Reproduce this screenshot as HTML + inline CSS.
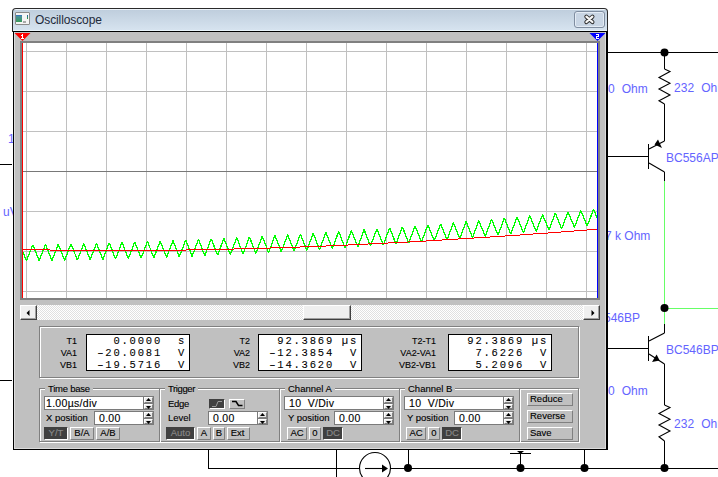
<!DOCTYPE html>
<html><head><meta charset="utf-8">
<style>
*{margin:0;padding:0;box-sizing:border-box}
html,body{width:718px;height:477px;overflow:hidden;background:#fff;position:relative}
body{font-family:"Liberation Sans",sans-serif}
.ab{position:absolute}
.lbl{position:absolute;font-size:12px;color:#6464ff;white-space:pre;line-height:12px}
.ui{position:absolute;font-size:9.5px;color:#000;white-space:pre;line-height:10px;-webkit-text-stroke:0.12px #000}
.etch{position:absolute;border:1px solid #808080;box-shadow:inset 1px 1px 0 #fff,1px 1px 0 #fff}
.btn{position:absolute;background:#c0c0c0;border-top:1px solid #fff;border-left:1px solid #fff;border-right:1px solid #808080;border-bottom:1px solid #808080;font-size:9.5px;line-height:10px;text-align:center;color:#000;-webkit-text-stroke:0.12px #000}
.prs{position:absolute;background:#404040;border-top:1px solid #404040;border-left:1px solid #404040;border-right:1px solid #fff;border-bottom:1px solid #fff;font-size:9.5px;line-height:10px;text-align:center;color:#8a8a8a;-webkit-text-stroke:0.12px #8a8a8a}
.box{position:absolute;background:#fff;border:1px solid #7a7a7a}
.spin{position:absolute;background:#808080}
.sb{position:absolute;background:#e0e0e0;border-top:1px solid #fff;border-left:1px solid #fff;border-right:1px solid #808080;border-bottom:1px solid #808080}
.num{position:absolute;font-family:"Liberation Mono",monospace;font-size:10.5px;line-height:12px;white-space:pre;color:#000;-webkit-text-stroke:0.08px #000}
</style></head><body>

<!-- schematic background -->
<svg class="ab" style="left:0;top:0" width="718" height="477" viewBox="0 0 718 477">
 <g stroke="#000" stroke-width="1" fill="none" shape-rendering="crispEdges">
  <line x1="0" y1="164.5" x2="12" y2="164.5"/>
  <line x1="0" y1="380.5" x2="12" y2="380.5"/>
  <line x1="607" y1="52.5" x2="718" y2="52.5"/>
  <line x1="664.5" y1="52" x2="664.5" y2="69"/>
  <line x1="664.5" y1="104" x2="664.5" y2="141"/>
  <line x1="607" y1="156.5" x2="648" y2="156.5"/>
  <line x1="648.5" y1="144" x2="648.5" y2="169"/>
  <line x1="664.5" y1="172" x2="664.5" y2="181"/>
  <line x1="664.5" y1="324" x2="664.5" y2="333"/>
  <line x1="607" y1="348.5" x2="648" y2="348.5"/>
  <line x1="648.5" y1="336" x2="648.5" y2="361"/>
  <line x1="664.5" y1="364" x2="664.5" y2="405"/>
  <line x1="664.5" y1="441" x2="664.5" y2="468"/>
  <line x1="208.5" y1="450" x2="208.5" y2="468"/>
  <line x1="208" y1="468.5" x2="359" y2="468.5"/>
  <line x1="390" y1="468.5" x2="718" y2="468.5"/>
  <line x1="336.5" y1="450" x2="336.5" y2="477"/>
  <line x1="408.5" y1="450" x2="408.5" y2="468"/>
  <line x1="520.5" y1="452" x2="520.5" y2="468"/>
  <line x1="510" y1="453.5" x2="531" y2="453.5"/>
  <line x1="584.5" y1="450" x2="584.5" y2="468"/>
 </g>
 <g stroke="#000" stroke-width="1.1" fill="none">
  <polyline points="664.5,69 670,71.5 659,77.4 670,83.3 659,89 670,95 659,100.8 664.5,104"/>
  <polyline points="664.5,405 670,407.5 659,413.4 670,419.3 659,425 670,431 659,436.8 664.5,441"/>
  <line x1="664.5" y1="141" x2="649" y2="149"/>
  <line x1="649" y1="163" x2="664.5" y2="172"/>
  <line x1="649" y1="341" x2="664.5" y2="333"/>
  <line x1="649" y1="354" x2="664.5" y2="364"/>
  <circle cx="375" cy="468" r="15.5"/>
  <line x1="365" y1="468.5" x2="385" y2="468.5"/>
 </g>
 <g fill="#000">
  <circle cx="664.5" cy="52.5" r="4"/>
  <circle cx="664.5" cy="468" r="4"/>
  <circle cx="408" cy="468" r="4"/>
  <circle cx="520.5" cy="468" r="4"/>
  <circle cx="584.5" cy="468" r="4"/>
  <polygon points="654.5,144.5 658,139.5 662,148"/>
  <polygon points="656.6,354.6 652,362 659.6,360.4"/>
  <polygon points="388,468.5 382,464.5 382,472.5"/>
  <polygon points="517,451 524,451 520.5,454"/>
 </g>
 <g stroke="#66ff66" stroke-width="1" fill="none" shape-rendering="crispEdges">
  <line x1="664.5" y1="181" x2="664.5" y2="324"/>
  <line x1="664" y1="308.5" x2="718" y2="308.5"/>
 </g>
 <circle cx="664.5" cy="308" r="4" fill="#000"/>
</svg>
<div class="lbl" style="left:8px;top:133px">1</div>
<div class="lbl" style="left:3px;top:206px">uV</div>
<div class="lbl" style="left:608px;top:83px;letter-spacing:0.1px">0  Ohm</div>
<div class="lbl" style="left:674px;top:82px;letter-spacing:0.1px">232  Ohm</div>
<div class="lbl" style="left:666px;top:152px">BC556AP</div>
<div class="lbl" style="left:605px;top:230px">7 k Ohm</div>
<div class="lbl" style="left:604px;top:312px">546BP</div>
<div class="lbl" style="left:666px;top:344px">BC546BP</div>
<div class="lbl" style="left:608px;top:385px;letter-spacing:0.1px">0  Ohm</div>
<div class="lbl" style="left:674px;top:418px;letter-spacing:0.1px">232  Ohm</div>

<!-- window -->
<div class="ab" style="left:12px;top:8px;width:596px;height:24px;background:#2a2a2a;border-radius:4px 4px 0 0"></div>
<div class="ab" style="left:13px;top:31px;width:595px;height:419px;background:#000"></div>
<div class="ab" style="left:13px;top:9px;width:594px;height:22px;border-radius:3px 3px 0 0;background:linear-gradient(#eef4fa 0,#eef4fa 1px,#bfcedd 1px,#d6e3ef 21px,#eaf5fb 21px)"></div>
<div class="ab" style="left:14px;top:32px;width:592px;height:417px;background:#c0c0c0;border-left:1px solid #dcdcdc;border-bottom:1px solid #dcdcdc;border-right:1px solid #dcdcdc"></div>
<!-- icon -->
<div class="ab" style="left:15px;top:12px;width:15px;height:13px;background:#f4f4f4;border:1px solid #8a8a8a;border-radius:1px"></div>
<div class="ab" style="left:16px;top:15px;width:6px;height:7px;background:linear-gradient(#3a78b8 0,#3a78b8 1px,#4a90a0 1px,#3a9a5a)"></div>
<div class="ab" style="left:27px;top:15px;width:1px;height:4px;background:linear-gradient(#1e5ab0,#3aa03a)"></div>
<div class="ab" style="left:23px;top:21px;width:3px;height:2px;background:#aaa"></div>
<div class="ab" style="left:35px;top:13px;font-size:12px;line-height:14px;color:#1e2a3a;letter-spacing:-0.1px">Oscilloscope</div>
<!-- close button -->
<div class="ab" style="left:574px;top:11px;width:31px;height:17px;border:1px solid #7f8da0;border-radius:3px;background:#c8d5e4;box-shadow:inset 0 0 0 1px #e4ecf5"></div>
<svg class="ab" style="left:582px;top:13px" width="15" height="13" viewBox="0 0 15 13">
 <path d="M4.4,3.7 L10.4,9 M10.4,3.7 L4.4,9" stroke="#2e2e2e" stroke-width="4.2" stroke-linecap="round"/>
 <path d="M4.4,3.7 L10.4,9 M10.4,3.7 L4.4,9" stroke="#f6f6f6" stroke-width="2.3" stroke-linecap="round"/>
</svg>

<!-- plot -->
<div class="ab" style="left:20px;top:41px;width:580px;height:259px;background:#808080"></div>
<svg class="ab" style="left:22px;top:43px" width="576" height="255" viewBox="22 43 576 255">
 <rect x="22" y="43" width="576" height="255" fill="#fff"/>
 <g stroke="#c0c0c0" stroke-width="1" shape-rendering="crispEdges">
  <line x1="26.5" y1="43" x2="26.5" y2="298"/>
  <line x1="66.5" y1="43" x2="66.5" y2="298"/>
  <line x1="106.5" y1="43" x2="106.5" y2="298"/>
  <line x1="146.5" y1="43" x2="146.5" y2="298"/>
  <line x1="186.5" y1="43" x2="186.5" y2="298"/>
  <line x1="226.5" y1="43" x2="226.5" y2="298"/>
  <line x1="266.5" y1="43" x2="266.5" y2="298"/>
  <line x1="306.5" y1="43" x2="306.5" y2="298"/>
  <line x1="346.5" y1="43" x2="346.5" y2="298"/>
  <line x1="386.5" y1="43" x2="386.5" y2="298"/>
  <line x1="426.5" y1="43" x2="426.5" y2="298"/>
  <line x1="466.5" y1="43" x2="466.5" y2="298"/>
  <line x1="506.5" y1="43" x2="506.5" y2="298"/>
  <line x1="546.5" y1="43" x2="546.5" y2="298"/>
  <line x1="586.5" y1="43" x2="586.5" y2="298"/>
  <line x1="22" y1="51.5" x2="598" y2="51.5"/>
  <line x1="22" y1="91.5" x2="598" y2="91.5"/>
  <line x1="22" y1="131.5" x2="598" y2="131.5"/>
  <line x1="22" y1="171.5" x2="598" y2="171.5"/>
  <line x1="22" y1="211.5" x2="598" y2="211.5"/>
  <line x1="22" y1="251.5" x2="598" y2="251.5"/>
  <line x1="22" y1="291.5" x2="598" y2="291.5"/>
  <line x1="22" y1="171.5" x2="598" y2="171.5" stroke="#787878"/>
 </g>
 <polyline points="22.5,251.2 26.4,260.9 32.8,244.8 39.1,260.7 45.5,244.5 51.9,260.5 58.3,244.2 64.6,260.3 71.0,243.9 77.4,260.0 83.8,243.6 90.1,259.7 96.5,243.2 102.9,259.4 109.2,242.9 115.6,259.0 122.0,242.4 128.4,258.6 134.7,242.0 141.1,258.2 147.5,241.5 153.8,257.8 160.2,241.0 166.6,257.3 173.0,240.5 179.3,256.8 185.7,240.0 192.1,256.3 198.5,239.4 204.8,255.8 211.2,238.8 217.6,255.2 223.9,238.2 230.3,254.6 236.7,237.6 243.1,253.9 249.4,236.9 255.8,253.3 262.2,236.2 268.6,252.6 274.9,235.5 281.3,251.8 287.7,234.7 294.0,251.1 300.4,234.0 306.8,250.3 313.2,233.2 319.5,249.5 325.9,232.4 332.3,248.7 338.7,231.5 345.0,247.8 351.4,230.6 357.8,246.9 364.1,229.7 370.5,246.0 376.9,228.8 383.3,245.0 389.6,227.9 396.0,244.0 402.4,226.9 408.7,243.0 415.1,225.9 421.5,242.0 427.9,224.9 434.2,240.9 440.6,223.8 447.0,239.8 453.4,222.7 459.7,238.7 466.1,221.6 472.5,237.6 478.8,220.5 485.2,236.4 491.6,219.3 498.0,235.2 504.3,218.2 510.7,234.0 517.1,217.0 523.5,232.7 529.8,215.7 536.2,231.4 542.6,214.5 548.9,230.1 555.3,213.2 561.7,228.7 568.1,211.9 574.4,227.4 580.8,210.5 587.2,226.0 593.6,209.2 597.5,218.7" fill="none" stroke="#00ff00" stroke-width="1.3" stroke-linejoin="bevel" shape-rendering="crispEdges"/>
 <polyline points="22.5,249.4 26.5,249.5 30.5,249.6 34.5,249.7 38.5,249.8 42.5,249.8 46.5,249.9 50.5,250.0 54.5,250.0 58.5,250.1 62.5,250.2 66.5,250.2 70.5,250.3 74.5,250.3 78.5,250.3 82.5,250.4 86.5,250.4 90.5,250.4 94.5,250.5 98.5,250.5 102.5,250.5 106.5,250.5 110.5,250.5 114.5,250.5 118.5,250.5 122.5,250.5 126.5,250.5 130.5,250.5 134.5,250.5 138.5,250.5 142.5,250.5 146.5,250.4 150.5,250.4 154.5,250.4 158.5,250.3 162.5,250.3 166.5,250.3 170.5,250.2 174.5,250.2 178.5,250.1 182.5,250.1 186.5,250.0 190.5,249.9 194.5,249.9 198.5,249.8 202.5,249.7 206.5,249.7 210.5,249.6 214.5,249.5 218.5,249.4 222.5,249.3 226.5,249.2 230.5,249.1 234.5,249.0 238.5,248.9 242.5,248.8 246.5,248.7 250.5,248.6 254.5,248.5 258.5,248.4 262.5,248.3 266.5,248.1 270.5,248.0 274.5,247.9 278.5,247.8 282.5,247.6 286.5,247.5 290.5,247.3 294.5,247.2 298.5,247.1 302.5,246.9 306.5,246.8 310.5,246.6 314.5,246.4 318.5,246.3 322.5,246.1 326.5,246.0 330.5,245.8 334.5,245.6 338.5,245.4 342.5,245.3 346.5,245.1 350.5,244.9 354.5,244.7 358.5,244.5 362.5,244.3 366.5,244.1 370.5,243.9 374.5,243.8 378.5,243.6 382.5,243.3 386.5,243.1 390.5,242.9 394.5,242.7 398.5,242.5 402.5,242.3 406.5,242.1 410.5,241.9 414.5,241.6 418.5,241.4 422.5,241.2 426.5,241.0 430.5,240.7 434.5,240.5 438.5,240.3 442.5,240.0 446.5,239.8 450.5,239.5 454.5,239.3 458.5,239.0 462.5,238.8 466.5,238.5 470.5,238.3 474.5,238.0 478.5,237.8 482.5,237.5 486.5,237.2 490.5,237.0 494.5,236.7 498.5,236.4 502.5,236.2 506.5,235.9 510.5,235.6 514.5,235.3 518.5,235.1 522.5,234.8 526.5,234.5 530.5,234.2 534.5,233.9 538.5,233.6 542.5,233.4 546.5,233.1 550.5,232.8 554.5,232.5 558.5,232.2 562.5,231.9 566.5,231.6 570.5,231.3 574.5,231.0 578.5,230.7 582.5,230.4 586.5,230.1 590.5,229.7 594.5,229.4 597.5,229.2" fill="none" stroke="#ff0000" stroke-width="1" shape-rendering="crispEdges"/>
 <line x1="22.5" y1="43" x2="22.5" y2="298" stroke="#ff0000" stroke-width="1" shape-rendering="crispEdges"/>
 <line x1="597.5" y1="43" x2="597.5" y2="298" stroke="#0000ff" stroke-width="1" shape-rendering="crispEdges"/>
</svg>
<svg class="ab" style="left:14px;top:32px" width="20" height="12" viewBox="14 32 20 12" shape-rendering="crispEdges">
 <polygon points="14.5,33 30.5,33 22.5,41" fill="#ff0000" shape-rendering="auto"/>
 <rect x="22" y="34" width="1" height="5" fill="#fff"/><rect x="21" y="35" width="1" height="1" fill="#fff"/><rect x="21" y="38" width="3" height="1" fill="#fff"/>
</svg>
<svg class="ab" style="left:589px;top:32px" width="18" height="12" viewBox="589 32 18 12" shape-rendering="crispEdges">
 <polygon points="589.5,33 605.5,33 597.5,41" fill="#0000ff" shape-rendering="auto"/>
 <rect x="596" y="34" width="3" height="1" fill="#fff"/><rect x="598" y="35" width="1" height="1" fill="#fff"/><rect x="596" y="36" width="3" height="1" fill="#fff"/><rect x="596" y="37" width="1" height="1" fill="#fff"/><rect x="596" y="38" width="3" height="1" fill="#fff"/>
</svg>

<!-- scrollbar -->
<div class="ab" style="left:20px;top:305px;width:580px;height:15px;background-color:#ffffff;background-image:linear-gradient(45deg,#e0e0e0 25%,transparent 25%,transparent 75%,#e0e0e0 75%),linear-gradient(45deg,#e0e0e0 25%,transparent 25%,transparent 75%,#e0e0e0 75%);background-size:2px 2px;background-position:0 0,1px 1px"></div>
<div class="sb" style="left:20px;top:305px;width:17px;height:15px;background:#efefef;border-right-color:#404040;border-bottom-color:#404040;box-shadow:inset -1px -1px 0 #a0a0a0"></div>
<svg class="ab" style="left:26px;top:310px" width="4" height="6"><polygon points="3.5,0 3.5,6 0.5,3" fill="#000"/></svg>
<div class="sb" style="left:583px;top:305px;width:17px;height:15px;background:#efefef;border-right-color:#404040;border-bottom-color:#404040;box-shadow:inset -1px -1px 0 #a0a0a0"></div>
<svg class="ab" style="left:591px;top:310px" width="4" height="6"><polygon points="0.5,0 0.5,6 3.5,3" fill="#000"/></svg>
<div class="sb" style="left:303px;top:305px;width:48px;height:15px;background:#efefef;border-right-color:#404040;border-bottom-color:#404040;box-shadow:inset -1px -1px 0 #a0a0a0"></div>

<div class="ab" style="left:40px;top:327px;width:540px;height:52px;border:1px solid #fff"></div>
<div class="ab" style="left:39px;top:326px;width:540px;height:52px;border:1px solid #808080;border-right-color:transparent;border-bottom-color:transparent"></div>
<div class="ab" style="left:578px;top:326px;width:1px;height:52px;background:#808080"></div>
<div class="ab" style="left:39px;top:377px;width:540px;height:1px;background:#808080"></div>
<div class="ab" style="left:86px;top:334px;width:104px;height:37px;background:#fff;border:1px solid #000"></div>
<div class="ui" style="left:-123px;width:200px;text-align:right;top:336px;font-size:9px">T1</div>
<div class="num" style="left:88px;width:74px;text-align:right;top:335px;letter-spacing:1.8px">0.0000</div>
<div class="num" style="left:145px;width:41px;text-align:right;top:335px;letter-spacing:1.8px">s</div>
<div class="ui" style="left:-123px;width:200px;text-align:right;top:348px;font-size:9px">VA1</div>
<div class="num" style="left:88px;width:74px;text-align:right;top:347px;letter-spacing:1.8px">–20.0081</div>
<div class="num" style="left:145px;width:41px;text-align:right;top:347px;letter-spacing:1.8px">V</div>
<div class="ui" style="left:-123px;width:200px;text-align:right;top:360px;font-size:9px">VB1</div>
<div class="num" style="left:88px;width:74px;text-align:right;top:359px;letter-spacing:1.8px">–19.5716</div>
<div class="num" style="left:145px;width:41px;text-align:right;top:359px;letter-spacing:1.8px">V</div>
<div class="ab" style="left:258px;top:334px;width:104px;height:37px;background:#fff;border:1px solid #000"></div>
<div class="ui" style="left:50px;width:200px;text-align:right;top:336px;font-size:9px">T2</div>
<div class="num" style="left:260px;width:74px;text-align:right;top:335px;letter-spacing:1.8px">92.3869</div>
<div class="num" style="left:317px;width:41px;text-align:right;top:335px;letter-spacing:1.8px">µs</div>
<div class="ui" style="left:50px;width:200px;text-align:right;top:348px;font-size:9px">VA2</div>
<div class="num" style="left:260px;width:74px;text-align:right;top:347px;letter-spacing:1.8px">–12.3854</div>
<div class="num" style="left:317px;width:41px;text-align:right;top:347px;letter-spacing:1.8px">V</div>
<div class="ui" style="left:50px;width:200px;text-align:right;top:360px;font-size:9px">VB2</div>
<div class="num" style="left:260px;width:74px;text-align:right;top:359px;letter-spacing:1.8px">–14.3620</div>
<div class="num" style="left:317px;width:41px;text-align:right;top:359px;letter-spacing:1.8px">V</div>
<div class="ab" style="left:448px;top:334px;width:104px;height:37px;background:#fff;border:1px solid #000"></div>
<div class="ui" style="left:236px;width:200px;text-align:right;top:336px;font-size:9px">T2-T1</div>
<div class="num" style="left:450px;width:74px;text-align:right;top:335px;letter-spacing:1.8px">92.3869</div>
<div class="num" style="left:507px;width:41px;text-align:right;top:335px;letter-spacing:1.8px">µs</div>
<div class="ui" style="left:236px;width:200px;text-align:right;top:348px;font-size:9px">VA2-VA1</div>
<div class="num" style="left:450px;width:74px;text-align:right;top:347px;letter-spacing:1.8px">7.6226</div>
<div class="num" style="left:507px;width:41px;text-align:right;top:347px;letter-spacing:1.8px">V</div>
<div class="ui" style="left:236px;width:200px;text-align:right;top:360px;font-size:9px">VB2-VB1</div>
<div class="num" style="left:450px;width:74px;text-align:right;top:359px;letter-spacing:1.8px">5.2096</div>
<div class="num" style="left:507px;width:41px;text-align:right;top:359px;letter-spacing:1.8px">V</div>
<div class="ab" style="left:40px;top:389px;width:540px;height:54px;border:1px solid #fff"></div>
<div class="ab" style="left:39px;top:388px;width:540px;height:54px;border:1px solid #808080;border-right-color:transparent;border-bottom-color:transparent"></div>
<div class="ab" style="left:578px;top:388px;width:1px;height:54px;background:#808080"></div>
<div class="ab" style="left:39px;top:441px;width:540px;height:1px;background:#808080"></div>
<div class="ab" style="left:159px;top:388px;width:1px;height:54px;background:#808080"></div>
<div class="ab" style="left:160px;top:389px;width:1px;height:53px;background:#fff"></div>
<div class="ab" style="left:279px;top:388px;width:1px;height:54px;background:#808080"></div>
<div class="ab" style="left:280px;top:389px;width:1px;height:53px;background:#fff"></div>
<div class="ab" style="left:399px;top:388px;width:1px;height:54px;background:#808080"></div>
<div class="ab" style="left:400px;top:389px;width:1px;height:53px;background:#fff"></div>
<div class="ab" style="left:519px;top:388px;width:1px;height:54px;background:#808080"></div>
<div class="ab" style="left:520px;top:389px;width:1px;height:53px;background:#fff"></div>
<div class="ui" style="left:45px;top:384px;padding:0 3px 0 3px;background:#c0c0c0;letter-spacing:-0.25px">Time base</div>
<div class="ui" style="left:165px;top:384px;padding:0 3px 0 3px;background:#c0c0c0;letter-spacing:-0.4px">Trigger</div>
<div class="ui" style="left:285px;top:384px;padding:0 3px 0 3px;background:#c0c0c0;">Channel A</div>
<div class="ui" style="left:405px;top:384px;padding:0 3px 0 3px;background:#c0c0c0;">Channel B</div>
<div class="ab" style="left:44px;top:396px;width:110px;height:14px;background:#7a7a7a"></div>
<div class="ab" style="left:45px;top:397px;width:98px;height:12px;background:#fff"></div>
<div class="sb" style="left:144px;top:397px;width:9px;height:6px;background:#e8e8e8"></div>
<svg class="ab" style="left:146px;top:398px" width="5" height="3"><polygon points="0,3 5,3 2.5,0" fill="#000"/></svg>
<div class="sb" style="left:144px;top:404px;width:9px;height:5px;background:#e8e8e8"></div>
<svg class="ab" style="left:146px;top:406px" width="5" height="3"><polygon points="0,0 5,0 2.5,3" fill="#000"/></svg>
<div class="ui" style="left:46px;top:398px;font-size:10.5px;line-height:11px;letter-spacing:0.3px">1.00µs/div</div>
<div class="ui" style="left:46px;top:413px;">X position</div>
<div class="ab" style="left:94px;top:411px;width:60px;height:14px;background:#7a7a7a"></div>
<div class="ab" style="left:95px;top:412px;width:48px;height:12px;background:#fff"></div>
<div class="sb" style="left:144px;top:412px;width:9px;height:6px;background:#e8e8e8"></div>
<svg class="ab" style="left:146px;top:413px" width="5" height="3"><polygon points="0,3 5,3 2.5,0" fill="#000"/></svg>
<div class="sb" style="left:144px;top:419px;width:9px;height:5px;background:#e8e8e8"></div>
<svg class="ab" style="left:146px;top:421px" width="5" height="3"><polygon points="0,0 5,0 2.5,3" fill="#000"/></svg>
<div class="ui" style="left:99px;top:413px;font-size:10.5px;line-height:11px;letter-spacing:0.3px">0.00</div>
<div class="prs" style="left:44px;top:427px;width:24px;height:13px;padding-top:0px;">Y/T</div>
<div class="btn" style="left:70px;top:427px;width:24px;height:13px;padding-top:0px;">B/A</div>
<div class="btn" style="left:96px;top:427px;width:24px;height:13px;padding-top:0px;">A/B</div>
<div class="ui" style="left:168px;top:399px;letter-spacing:-0.3px">Edge</div>
<div class="prs" style="left:209px;top:399px;width:16px;height:10px;padding-top:0px;"></div>
<div class="btn" style="left:229px;top:399px;width:16px;height:10px;padding-top:0px;"></div>
<svg class="ab" style="left:211px;top:400px" width="12" height="8"><polyline points="1,6.5 5,6.5 7,1.5 11,1.5" fill="none" stroke="#9a9a9a" stroke-width="1"/></svg>
<svg class="ab" style="left:231px;top:400px" width="12" height="8"><polyline points="1,1.5 5,1.5 7.5,5.5 11.5,5.5" fill="none" stroke="#000" stroke-width="1.5"/></svg>
<div class="ui" style="left:168px;top:413px;">Level</div>
<div class="ab" style="left:208px;top:411px;width:60px;height:14px;background:#7a7a7a"></div>
<div class="ab" style="left:209px;top:412px;width:48px;height:12px;background:#fff"></div>
<div class="sb" style="left:258px;top:412px;width:9px;height:6px;background:#e8e8e8"></div>
<svg class="ab" style="left:260px;top:413px" width="5" height="3"><polygon points="0,3 5,3 2.5,0" fill="#000"/></svg>
<div class="sb" style="left:258px;top:419px;width:9px;height:5px;background:#e8e8e8"></div>
<svg class="ab" style="left:260px;top:421px" width="5" height="3"><polygon points="0,0 5,0 2.5,3" fill="#000"/></svg>
<div class="ui" style="left:213px;top:413px;font-size:10.5px;line-height:11px;letter-spacing:0.3px">0.00</div>
<div class="prs" style="left:166px;top:427px;width:29px;height:13px;padding-top:0px;">Auto</div>
<div class="btn" style="left:197px;top:427px;width:14px;height:13px;padding-top:0px;">A</div>
<div class="btn" style="left:213px;top:427px;width:12px;height:13px;padding-top:0px;">B</div>
<div class="btn" style="left:227px;top:427px;width:23px;height:13px;padding-top:0px;padding-right:2px">Ext</div>
<div class="ab" style="left:284px;top:396px;width:110px;height:14px;background:#7a7a7a"></div>
<div class="ab" style="left:285px;top:397px;width:98px;height:12px;background:#fff"></div>
<div class="sb" style="left:384px;top:397px;width:9px;height:6px;background:#e8e8e8"></div>
<svg class="ab" style="left:386px;top:398px" width="5" height="3"><polygon points="0,3 5,3 2.5,0" fill="#000"/></svg>
<div class="sb" style="left:384px;top:404px;width:9px;height:5px;background:#e8e8e8"></div>
<svg class="ab" style="left:386px;top:406px" width="5" height="3"><polygon points="0,0 5,0 2.5,3" fill="#000"/></svg>
<div class="ui" style="left:289px;top:398px;font-size:10.5px;line-height:11px;letter-spacing:0.3px">10  V/Div</div>
<div class="ui" style="left:288px;top:413px;">Y position</div>
<div class="ab" style="left:334px;top:411px;width:60px;height:14px;background:#7a7a7a"></div>
<div class="ab" style="left:335px;top:412px;width:48px;height:12px;background:#fff"></div>
<div class="sb" style="left:384px;top:412px;width:9px;height:6px;background:#e8e8e8"></div>
<svg class="ab" style="left:386px;top:413px" width="5" height="3"><polygon points="0,3 5,3 2.5,0" fill="#000"/></svg>
<div class="sb" style="left:384px;top:419px;width:9px;height:5px;background:#e8e8e8"></div>
<svg class="ab" style="left:386px;top:421px" width="5" height="3"><polygon points="0,0 5,0 2.5,3" fill="#000"/></svg>
<div class="ui" style="left:339px;top:413px;font-size:10.5px;line-height:11px;letter-spacing:0.3px">0.00</div>
<div class="btn" style="left:287px;top:427px;width:20px;height:13px;padding-top:0px;">AC</div>
<div class="btn" style="left:309px;top:427px;width:12px;height:13px;padding-top:0px;">0</div>
<div class="prs" style="left:323px;top:427px;width:20px;height:13px;padding-top:0px;">DC</div>
<div class="ab" style="left:404px;top:396px;width:110px;height:14px;background:#7a7a7a"></div>
<div class="ab" style="left:405px;top:397px;width:98px;height:12px;background:#fff"></div>
<div class="sb" style="left:504px;top:397px;width:9px;height:6px;background:#e8e8e8"></div>
<svg class="ab" style="left:506px;top:398px" width="5" height="3"><polygon points="0,3 5,3 2.5,0" fill="#000"/></svg>
<div class="sb" style="left:504px;top:404px;width:9px;height:5px;background:#e8e8e8"></div>
<svg class="ab" style="left:506px;top:406px" width="5" height="3"><polygon points="0,0 5,0 2.5,3" fill="#000"/></svg>
<div class="ui" style="left:409px;top:398px;font-size:10.5px;line-height:11px;letter-spacing:0.3px">10  V/Div</div>
<div class="ui" style="left:407px;top:413px;">Y position</div>
<div class="ab" style="left:454px;top:411px;width:60px;height:14px;background:#7a7a7a"></div>
<div class="ab" style="left:455px;top:412px;width:48px;height:12px;background:#fff"></div>
<div class="sb" style="left:504px;top:412px;width:9px;height:6px;background:#e8e8e8"></div>
<svg class="ab" style="left:506px;top:413px" width="5" height="3"><polygon points="0,3 5,3 2.5,0" fill="#000"/></svg>
<div class="sb" style="left:504px;top:419px;width:9px;height:5px;background:#e8e8e8"></div>
<svg class="ab" style="left:506px;top:421px" width="5" height="3"><polygon points="0,0 5,0 2.5,3" fill="#000"/></svg>
<div class="ui" style="left:459px;top:413px;font-size:10.5px;line-height:11px;letter-spacing:0.3px">0.00</div>
<div class="btn" style="left:406px;top:427px;width:20px;height:13px;padding-top:0px;">AC</div>
<div class="btn" style="left:428px;top:427px;width:12px;height:13px;padding-top:0px;">0</div>
<div class="prs" style="left:442px;top:427px;width:20px;height:13px;padding-top:0px;">DC</div>
<div class="btn" style="left:527px;top:393px;width:46px;height:13px;padding-top:0px;text-align:left;padding-left:2px">Reduce</div>
<div class="btn" style="left:527px;top:410px;width:46px;height:13px;padding-top:0px;text-align:left;padding-left:2px">Reverse</div>
<div class="btn" style="left:527px;top:427px;width:46px;height:13px;padding-top:0px;text-align:left;padding-left:2px">Save</div>
</body></html>
